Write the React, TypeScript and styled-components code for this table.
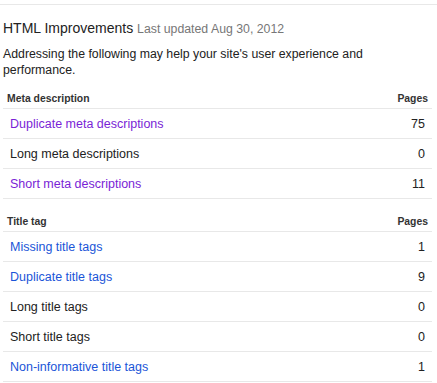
import React from "react";
import styled, { createGlobalStyle } from "styled-components";

const Global = createGlobalStyle`
  html, body { margin: 0; padding: 0; background: #fff; }
  body { font-family: "Liberation Sans", Arial, sans-serif; color: #222; }
`;

const Page = styled.div`
  width: 437px;
  padding-top: 4px;
`;

const Panel = styled.div`
  border-top: 1px solid #e8e8e8;
  padding: 0 5px 0 3px;
`;

const Heading = styled.h2`
  margin: 13px 0 0;
  font-size: 14px;
  line-height: 20px;
  font-weight: normal;
  color: #222;
  white-space: nowrap;
`;

const Updated = styled.span`
  font-size: 12.3px;
  color: #777;
`;

const Intro = styled.p`
  margin: 7px 0 0;
  font-size: 12.3px;
  line-height: 16px;
  color: #222;
`;

const Table = styled.div<{ $gap: number }>`
  margin-top: ${(p) => p.$gap}px;
  display: flex;
  flex-direction: column;
`;

const HeadRow = styled.div`
  height: 19px;
  display: flex;
  align-items: center;
  justify-content: space-between;
  padding: 0 4px;
  border-bottom: 1px solid #e8e8e8;
  font-size: 10.4px;
  font-weight: bold;
  color: #333;
`;

const Row = styled.div`
  height: 29px;
  display: flex;
  align-items: center;
  justify-content: space-between;
  padding: 0 7px;
  border-bottom: 1px solid #e8e8e8;
  font-size: 12.5px;
`;

const Label = styled.span<{ $kind: "visited" | "link" | "plain" }>`
  color: ${(p) =>
    p.$kind === "visited" ? "#7a1fd6" : p.$kind === "link" ? "#1a55d8" : "#222"};
`;

const Count = styled.span`
  color: #222;
`;

type Item = { label: string; count: number; kind: "visited" | "link" | "plain" };

const meta: Item[] = [
  { label: "Duplicate meta descriptions", count: 75, kind: "visited" },
  { label: "Long meta descriptions", count: 0, kind: "plain" },
  { label: "Short meta descriptions", count: 11, kind: "visited" },
];

const title: Item[] = [
  { label: "Missing title tags", count: 1, kind: "link" },
  { label: "Duplicate title tags", count: 9, kind: "link" },
  { label: "Long title tags", count: 0, kind: "plain" },
  { label: "Short title tags", count: 0, kind: "plain" },
  { label: "Non-informative title tags", count: 1, kind: "link" },
];

function Section({ name, items, gap }: { name: string; items: Item[]; gap: number }) {
  return (
    <Table $gap={gap}>
      <HeadRow>
        <span>{name}</span>
        <span>Pages</span>
      </HeadRow>
      {items.map((it) => (
        <Row key={it.label}>
          <Label $kind={it.kind}>{it.label}</Label>
          <Count>{it.count}</Count>
        </Row>
      ))}
    </Table>
  );
}

export default function App() {
  return (
    <Page>
      <Global />
      <Panel>
        <Heading>
          HTML Improvements <Updated>Last updated Aug 30, 2012</Updated>
        </Heading>
        <Intro>
          Addressing the following may help your site's user experience and performance.
        </Intro>
        <Section name="Meta description" items={meta} gap={11} />
        <Section name="Title tag" items={title} gap={13} />
      </Panel>
    </Page>
  );
}
